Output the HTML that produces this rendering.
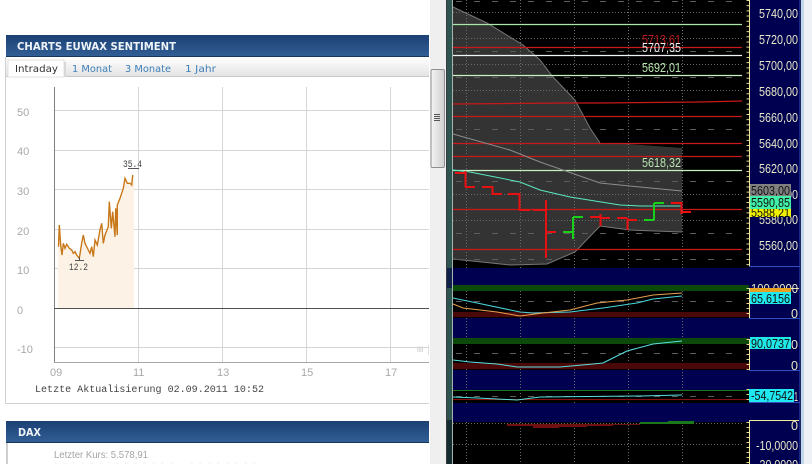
<!DOCTYPE html>
<html><head><meta charset="utf-8"><style>
html,body{margin:0;padding:0;width:812px;height:464px;overflow:hidden;background:#fff}
svg{display:block}
.y{font:11px "Liberation Sans",sans-serif;fill:#a8a8a8}
.m{font:10px "Liberation Mono",monospace;fill:#444}
.p{font:13px "Liberation Sans",sans-serif;fill:#e8e8c8}
.t{font:13px "Liberation Sans",sans-serif;fill:#111}
</style></head><body>
<svg xmlns="http://www.w3.org/2000/svg" width="812" height="464" viewBox="0 0 812 464" shape-rendering="auto">
<defs>
<linearGradient id="h" x1="0" y1="0" x2="0" y2="1"><stop offset="0" stop-color="#1b4074"/><stop offset="1" stop-color="#315f96"/></linearGradient>
<linearGradient id="tb" x1="0" y1="0" x2="0" y2="1"><stop offset="0" stop-color="#fff"/><stop offset="1" stop-color="#e2e2e2"/></linearGradient>
<linearGradient id="th" x1="0" y1="0" x2="1" y2="0"><stop offset="0" stop-color="#f4f4f4"/><stop offset="1" stop-color="#cfcfcf"/></linearGradient>
</defs>

<!-- left page -->
<rect width="430" height="464" fill="#fff"/>
<rect x="6" y="35" width="423" height="22" fill="url(#h)"/>
<rect x="6" y="56" width="423" height="1" fill="#16365c"/>
<text x="17" y="50" font-family="'DejaVu Sans',sans-serif" font-weight="bold" font-size="10.5" fill="#eef3f8" textLength="159" lengthAdjust="spacingAndGlyphs">CHARTS EUWAX SENTIMENT</text>
<rect x="6" y="57" width="423" height="20" fill="url(#tb)"/>
<rect x="6" y="76" width="423" height="1" fill="#c8c8c8"/>
<rect x="8" y="60" width="56" height="17" fill="#fff" stroke="#e0e0e0" stroke-width="1"/>
<rect x="64" y="62" width="2" height="15" fill="#d8d8d8"/>
<g font-family="'DejaVu Sans',sans-serif" font-size="10">
<text x="15" y="72" fill="#333" textLength="43" lengthAdjust="spacingAndGlyphs">Intraday</text>
<text x="72" y="72" fill="#3e7fb8" textLength="40" lengthAdjust="spacingAndGlyphs">1 Monat</text>
<text x="125" y="72" fill="#3e7fb8" textLength="46" lengthAdjust="spacingAndGlyphs">3 Monate</text>
<text x="185" y="72" fill="#3e7fb8" textLength="31" lengthAdjust="spacingAndGlyphs">1 Jahr</text>
</g>
<rect x="5" y="57" width="1" height="347" fill="#d0d0d0"/>
<rect x="5" y="403" width="424" height="1" fill="#d0d0d0"/>

<!-- euwax grid -->
<g stroke="#d6d6d6" stroke-width="1" fill="none">
<path d="M138.5 87V362M222.5 87V362M306.5 87V362M390.5 87V362"/>
<path d="M54 110.5H429M54 150.5H429M54 189.5H429M54 229.5H429M54 268.5H429M54 347.5H429"/>
</g>
<path d="M58 246 59.3 225 60.7 245 62 255 63.3 243 65 248 66.7 244 69.3 248 71.7 250 73.3 253 75 252 76.7 255 79.3 258 81.7 243 83.3 235 85 243 88.3 250 90 253 91.7 247 93.3 257 95 240 97.3 245 100 230 101.7 223 103.3 243 105 235 108.3 227 109.3 202 111.3 228 112.7 212 115 237 117.3 205 120 198 123.3 188 125 178 127.3 183 130 183 131.7 185 132.7 175 134 175V308H58Z" fill="#fcf2e6"/>
<path d="M58.5 246.7 59.3 225 60.7 245 62 255 63.3 243.3 65 248.3 66.7 244.3 69.3 248.3 71.7 250 73.3 253.3 75 251.7 76.7 255 79.3 258.3 81.7 243.3 83.3 235 85 243.3 88.3 250 90 253.3 91.7 246.7 93.3 256.7 95 240 97.3 245 100 230 101.7 223.3 103.3 243.3 105 235 108.3 226.7 109.3 201.7 111.3 228.3 112.7 211.7 115 236.7 115.7 208.3 117.3 235 117.3 205 120 198.3 123.3 188.3 125 178.3 127.3 183.3 130 183.3 131.7 185 132.7 175" fill="none" stroke="#c87818" stroke-width="1.4"/>
<rect x="54" y="87" width="1" height="276" fill="#808080"/>
<rect x="54" y="362" width="375" height="1" fill="#a8a8a8"/>
<rect x="54" y="308" width="375" height="1" fill="#505050"/>
<rect x="128" y="168" width="11" height="1" fill="#555"/>
<path d="M75 260.5H84M79.5 257V260" stroke="#555" fill="none"/>
<text class="m" x="123" y="167" textLength="19" lengthAdjust="spacingAndGlyphs">35.4</text>
<text class="m" x="69" y="270" textLength="19" lengthAdjust="spacingAndGlyphs">12.2</text>
<g>
<text class="y" x="17" y="116">50</text>
<text class="y" x="17" y="155">40</text>
<text class="y" x="17" y="195">30</text>
<text class="y" x="17" y="235">20</text>
<text class="y" x="17" y="274">10</text>
<text class="y" x="17" y="314">0</text>
<text class="y" x="17" y="353">-10</text>
<text class="y" x="50" y="376">09</text>
<text class="y" x="133" y="376">11</text>
<text class="y" x="217" y="376">13</text>
<text class="y" x="301" y="376">15</text>
<text class="y" x="385" y="376">17</text>
</g>
<text x="417" y="352" font-family="'Liberation Sans',sans-serif" font-size="7" fill="#c4c4c4">iiii</text>
<path d="M428.5 345V355" stroke="#ddd"/>
<text class="m" x="35" y="392" textLength="229" lengthAdjust="spacingAndGlyphs">Letzte Aktualisierung 02.09.2011 10:52</text>

<rect x="6" y="421" width="423" height="22" fill="url(#h)"/>
<rect x="6" y="442" width="423" height="1" fill="#16365c"/>
<text x="18" y="436" font-family="'DejaVu Sans',sans-serif" font-weight="bold" font-size="11" fill="#eef3f8" textLength="23" lengthAdjust="spacingAndGlyphs">DAX</text>
<rect x="6" y="443" width="2" height="21" fill="#cfcfcf"/>
<text x="54" y="458" font-family="'Liberation Sans',sans-serif" font-size="10.5" fill="#a4a4a4" textLength="94" lengthAdjust="spacingAndGlyphs">Letzter Kurs: 5.578,91</text>
<path d="M54 463H110M116 463H180M190 463H260" stroke="#f0f0f0" stroke-dasharray="3 6"/>

<!-- scrollbar -->
<rect x="430" y="0" width="16" height="464" fill="#efefef"/>
<rect x="431" y="69.500" width="13.500" height="98" rx="1.500" fill="url(#th)" stroke="#8f8f8f"/>
<path d="M434 114.500h6M434 116.500h6M434 118.500h6M434 120.500h6" stroke="#555"/>

<!-- trading platform -->
<rect x="446" y="0" width="366" height="464" fill="#000"/>
<rect x="446" y="0" width="1" height="464" fill="#3a3a3a"/>
<rect x="447" y="0" width="5" height="464" fill="#2e5450"/>
<rect x="447" y="268" width="5" height="20" fill="#10204a"/>
<rect x="447" y="420" width="5" height="44" fill="#142c30"/>
<rect x="452" y="0" width="1" height="464" fill="#a8b4ae"/>

<!-- navy bands -->
<rect x="453" y="268" width="296" height="17" fill="#000050"/>
<rect x="453" y="318" width="296" height="20" fill="#000050"/>
<rect x="453" y="370" width="296" height="20" fill="#000050"/>
<rect x="453" y="403" width="296" height="19" fill="#000050"/>

<!-- bollinger cone -->
<path d="M453 7 487 23 523 45 540 60 553 77 575 100 590 128 600 143 615 143 682 148V232L630 230 600 226 575 252 547 264 510 265 453 259Z" fill="#333"/>
<path d="M453 7 487 23 523 45 540 60 553 77 575 100 590 128 600 143M453 259 510 265 547 264 575 252 600 226 630 230 682 232" fill="none" stroke="#777" stroke-width="1"/>

<!-- dotted grid -->
<g fill="none" stroke="#6a6a6a" stroke-width="1" stroke-dasharray="1 2">
<path d="M466.500 0V268M520.500 0V268M574.500 0V268M628.500 0V268M682.500 0V268"/>
<path d="M466.500 285V403M520.500 285V403M574.500 285V403M628.500 285V403M682.500 285V403"/>
<path d="M466.500 422V464M520.500 422V464M574.500 422V464M628.500 422V464M682.500 422V464"/>
<path d="M453 12.500H742M453 38.500H742M453 64.500H742M453 90.500H742M453 194.500H742M453 220.500H742"/>
<path d="M453 444.500H742"/>
</g>
<g fill="none" stroke="#5c5c5c" stroke-width="1" stroke-dasharray="6 12">
<path d="M456 1.500H742M456 51.500H742M456 77.500H742M456 129.500H742M456 181.500H742M456 233.500H742M456 259.500H742"/>
<path d="M456 301.500H742M456 353.500H742M456 396.500H742"/>
</g>

<!-- horizontal levels -->
<g fill="none" stroke-width="1.300">
<path d="M453 24.500H742" stroke="#a8e8a8"/>
<path d="M453 47.500H742" stroke="#c81818"/>
<path d="M453 55.500H742" stroke="#f4f4f4"/>
<path d="M453 75.500H742" stroke="#c8f0c0"/>
<path d="M453 104 565 103 600 103 700 102 742 101" stroke="#c81818"/>
<path d="M453 116.500H742" stroke="#c81818"/>
<path d="M453 143.500H742" stroke="#c81818"/>
<path d="M453 156.500H742" stroke="#c81818"/>
<path d="M453 170.500H742" stroke="#c8f0c0"/>
<path d="M453 209.500H742" stroke="#c81818"/>
<path d="M453 249.500H742" stroke="#c81818"/>
<path d="M453 134 510 150 540 162 600 183 640 187 682 191" stroke="#8c8c8c" stroke-width="1"/>
<path d="M453 170 470 172 520 182 540 190 570 197 620 205 640 206 682 206" stroke="#58e8c0" stroke-width="1"/>
</g>

<!-- candles -->
<g fill="none" stroke="#e81010" stroke-width="2">
<path d="M455 173H465M465.500 171V187M465 187H475M482 187H492M492.500 186V195M492 194H502M508 194H519M519.500 193V210M519 210H530M533 210H545M546 200V258M546 232H556"/>
<path d="M590 217H600M600.500 214V226M600 218H610M617 218H627M627.500 218V230M627 220H637M671 203H681M681.500 202V214M681 212H691"/>
</g>
<g fill="none" stroke="#18d018" stroke-width="2">
<path d="M563 232H573M573 217V239M573 217H583M644 220H654M654 203V220M654 203H664"/>
</g>

<!-- overlay price text -->
<text class="p" x="642" y="44" style="fill:#c01818" textLength="39" lengthAdjust="spacingAndGlyphs">5713,61</text>
<text class="p" x="642" y="52" style="fill:#f0f0f0" textLength="39" lengthAdjust="spacingAndGlyphs">5707,35</text>
<text class="p" x="642" y="72" style="fill:#b8e8b0" textLength="39" lengthAdjust="spacingAndGlyphs">5692,01</text>
<text class="p" x="642" y="167" style="fill:#b8e8b0" textLength="39" lengthAdjust="spacingAndGlyphs">5618,32</text>

<!-- indicator panel 1 -->
<rect x="453" y="285" width="296" height="6" fill="#0c4a0c"/>
<rect x="453" y="312" width="296" height="5" fill="#4a0808"/>
<path d="M453 298 477 303 520 312 533 313 570 312 603 308 637 303 653 299 682 296" fill="none" stroke="#48d8e0"/>
<path d="M453 304 463 308 497 312 520 316 543 313 570 310 597 303 627 300 653 295 682 293" fill="none" stroke="#e8a050"/>

<!-- indicator panel 2 -->
<rect x="453" y="338" width="296" height="6" fill="#0c4a0c"/>
<rect x="453" y="363" width="296" height="6" fill="#4a0808"/>
<path d="M453 360 470 362 497 364 517 367 560 367 593 364 603 363 627 351 653 344 682 341" fill="none" stroke="#58e0e0"/>

<!-- indicator panel 3 -->
<rect x="453" y="390" width="296" height="1" fill="#1c7a1c"/>
<rect x="453" y="399" width="296" height="1" fill="#8a1010"/>
<path d="M453 397 478 398 517 400 540 397 640 396 682 395" fill="none" stroke="#58e0e0"/>

<!-- histogram -->
<path d="M453 423.500H742" stroke="#6a6a6a" stroke-dasharray="1 2"/>
<rect x="507" y="424" width="26" height="2" fill="#701010"/>
<rect x="533" y="424" width="26" height="4" fill="#701010"/>
<rect x="559" y="424" width="28" height="3" fill="#701010"/>
<rect x="587" y="424" width="26" height="2" fill="#701010"/>
<rect x="613" y="424" width="27" height="1" fill="#701010"/>
<rect x="640" y="422" width="28" height="2" fill="#1a7a1a"/>
<rect x="668" y="421" width="26" height="3" fill="#1a7a1a"/>

<!-- right axis -->
<rect x="749" y="0" width="51" height="464" fill="#000050"/>
<rect x="799.500" y="0" width="1" height="464" fill="#3050c0"/>
<rect x="801" y="0" width="11" height="464" fill="#eef2f6"/>
<rect x="801" y="0" width="3" height="464" fill="#c4d8ec"/>
<rect x="749" y="0" width="1" height="266" fill="#f0e8a0"/>
<path d="M748 0V266" stroke="#e8d890" stroke-width="3" stroke-dasharray="1 4.180" fill="none"/>
<rect x="749" y="266" width="51" height="1" fill="#3050c0"/>
<rect x="749" y="288" width="50" height="1" fill="#f0e8a0"/>
<rect x="749" y="288" width="1" height="30" fill="#f0e8a0"/>
<rect x="749" y="318" width="51" height="1" fill="#3050c0"/>
<rect x="749" y="339" width="1" height="31" fill="#f0e8a0"/>
<rect x="749" y="370" width="51" height="1" fill="#3050c0"/>
<rect x="749" y="389" width="1" height="14" fill="#f0e8a0"/>
<rect x="749" y="402" width="51" height="1" fill="#3050c0"/>
<rect x="749" y="420" width="50" height="1" fill="#f0e8a0"/>
<rect x="749" y="420" width="1" height="44" fill="#f0e8a0"/>
<g fill="none" stroke="#e8d890" stroke-width="3" stroke-dasharray="1 4">
<path d="M748 288V318M748 339V370M748 389V403M748 422V464"/>
</g>

<g>
<text class="p" x="759" y="18" textLength="39" lengthAdjust="spacingAndGlyphs">5740,00</text>
<text class="p" x="759" y="44" textLength="39" lengthAdjust="spacingAndGlyphs">5720,00</text>
<text class="p" x="759" y="70" textLength="39" lengthAdjust="spacingAndGlyphs">5700,00</text>
<text class="p" x="759" y="96" textLength="39" lengthAdjust="spacingAndGlyphs">5680,00</text>
<text class="p" x="759" y="122" textLength="39" lengthAdjust="spacingAndGlyphs">5660,00</text>
<text class="p" x="759" y="148" textLength="39" lengthAdjust="spacingAndGlyphs">5640,00</text>
<text class="p" x="759" y="173" textLength="39" lengthAdjust="spacingAndGlyphs">5620,00</text>
<text class="p" x="759" y="199" textLength="39" lengthAdjust="spacingAndGlyphs">5600,00</text>
<text class="p" x="759" y="224" textLength="39" lengthAdjust="spacingAndGlyphs">5580,00</text>
<text class="p" x="759" y="250" textLength="39" lengthAdjust="spacingAndGlyphs">5560,00</text>
</g>
<rect x="750" y="184" width="41" height="12" fill="#808080"/>
<text class="t" x="751" y="195" textLength="39" lengthAdjust="spacingAndGlyphs">5603,00</text>
<rect x="750" y="209" width="41" height="8" fill="#f0f000"/>
<text class="t" x="751" y="217" textLength="39" lengthAdjust="spacingAndGlyphs">5588,21</text>
<rect x="750" y="196" width="41" height="13" fill="#40f0a8"/>
<text class="t" x="751" y="207" textLength="39" lengthAdjust="spacingAndGlyphs">5590,85</text>

<text class="p" x="751" y="293" textLength="47" lengthAdjust="spacingAndGlyphs">100,0000</text>
<rect x="750" y="288" width="41" height="4" fill="#e8a020"/>
<rect x="750" y="292" width="41" height="12" fill="#20e8f0"/>
<text class="t" x="751" y="303" textLength="39" lengthAdjust="spacingAndGlyphs">65,6156</text>
<text class="p" x="791" y="318" textLength="7" lengthAdjust="spacingAndGlyphs">0</text>

<text class="p" x="791" y="349" textLength="7" lengthAdjust="spacingAndGlyphs">0</text>
<rect x="750" y="337" width="41" height="12" fill="#20e8e8"/>
<text class="t" x="751" y="348" textLength="39" lengthAdjust="spacingAndGlyphs">90,0737</text>
<text class="p" x="791" y="370" textLength="7" lengthAdjust="spacingAndGlyphs">0</text>

<text class="p" x="794" y="401" textLength="4" lengthAdjust="spacingAndGlyphs">1</text>
<rect x="749" y="389" width="45" height="13" fill="#20e8f0"/>
<text class="t" x="751" y="400" textLength="42" lengthAdjust="spacingAndGlyphs">-54,7542</text>

<text class="p" x="791" y="430" textLength="7" lengthAdjust="spacingAndGlyphs">0</text>
<text class="p" x="756" y="450" textLength="42" lengthAdjust="spacingAndGlyphs">-10,0000</text>
<text class="p" x="756" y="469" textLength="42" lengthAdjust="spacingAndGlyphs">-20,0000</text>
</svg>
</body></html>
